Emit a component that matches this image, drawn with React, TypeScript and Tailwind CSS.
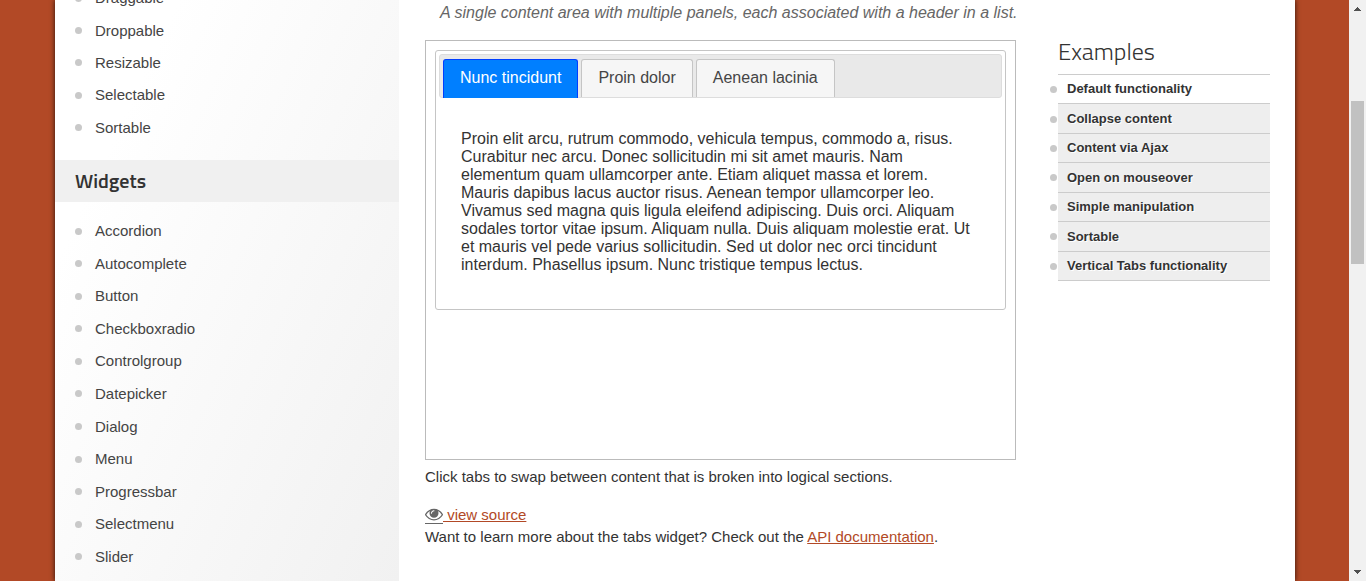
const interactions = ["Draggable", "Droppable", "Resizable", "Selectable", "Sortable"];

const widgets = [
  "Accordion",
  "Autocomplete",
  "Button",
  "Checkboxradio",
  "Controlgroup",
  "Datepicker",
  "Dialog",
  "Menu",
  "Progressbar",
  "Selectmenu",
  "Slider",
];

const tabs = ["Nunc tincidunt", "Proin dolor", "Aenean lacinia"];

const examples = [
  "Default functionality",
  "Collapse content",
  "Content via Ajax",
  "Open on mouseover",
  "Simple manipulation",
  "Sortable",
  "Vertical Tabs functionality",
];

function Bullet() {
  return <span className="size-[7px] shrink-0 rounded-full bg-[#c9c9c9]" />;
}

function EyeIcon() {
  return (
    <svg className="block size-[18px]" viewBox="0 0 1792 1792" fill="currentColor" aria-hidden="true">
      <path d="M1664 960q-152-236-381-353 61 104 61 225 0 185-131.500 316.500t-316.500 131.500-316.500-131.500-131.500-316.500q0-121 61-225-229 117-381 353 133 205 333.500 326.500t434.500 121.500 434.500-121.500 333.500-326.500zm-720-384q0-20-14-34t-34-14q-125 0-214.500 89.500t-89.500 214.500q0 20 14 34t34 14 34-14 14-34q0-86 61-147t147-61q20 0 34-14t14-34zm848 384q0 34-20 69-140 230-376.500 368.500t-499.500 138.500-499.500-139-376.500-368q-20-35-20-69t20-69q140-229 376.500-368t499.500-139 499.500 139 376.500 368q20 35 20 69z" />
    </svg>
  );
}

function SideItem({ label }: { label: string }) {
  return (
    <li className="flex items-center gap-[13px] pl-5">
      <Bullet />
      <a href="#" className="text-[15px] leading-5 text-[#444]">
        {label}
      </a>
    </li>
  );
}

function Sidebar() {
  return (
    <aside className="w-[344px] shrink-0 overflow-hidden bg-[linear-gradient(115deg,#fff_20%,#f1f1f1)]">
      <ul className="-mt-[18px] grid h-[162px] auto-rows-fr">
        {interactions.map((label) => (
          <SideItem key={label} label={label} />
        ))}
      </ul>
      <h3 className="mt-4 bg-[#f0f0f0] pl-5 font-['Titillium_Web','Open_Sans',sans-serif] text-[20px] leading-[42px] font-semibold text-[#333]">
        Widgets
      </h3>
      <ul className="mt-[13px] grid h-[358px] auto-rows-fr">
        {widgets.map((label) => (
          <SideItem key={label} label={label} />
        ))}
      </ul>
    </aside>
  );
}

function TabsDemo() {
  return (
    <div className="min-h-[420px] border border-[#bbb] p-[9px]">
      <div className="rounded-[3px] border border-[#c5c5c5] p-[3px]">
        <div
          role="tablist"
          className="flex h-11 items-end gap-[3px] rounded-[3px] border border-[#ddd] bg-[#e9e9e9] px-[3px]"
        >
          {tabs.map((label, index) => (
            <button
              key={label}
              type="button"
              role="tab"
              aria-selected={index === 0}
              className={
                index === 0
                  ? "-mb-px h-[39px] rounded-t-[3px] border border-b-0 border-[#003eff] bg-[#007fff] px-4 pb-[3px] text-[16px] leading-5 text-white"
                  : "h-[38px] rounded-t-[3px] border border-b-0 border-[#c5c5c5] bg-[#f6f6f6] px-4 pb-[2px] text-[16px] leading-5 text-[#454545]"
              }
            >
              {label}
            </button>
          ))}
        </div>
        <div role="tabpanel" className="px-[22px] pt-8 pb-8">
          <p className="text-[16px] leading-[18px] text-[#333]">
            Proin elit arcu, rutrum commodo, vehicula tempus, commodo a, risus. Curabitur nec arcu.
            Donec sollicitudin mi sit amet mauris. Nam elementum quam ullamcorper ante. Etiam
            aliquet massa et lorem. Mauris dapibus lacus auctor risus. Aenean tempor ullamcorper
            leo. Vivamus sed magna quis ligula eleifend adipiscing. Duis orci. Aliquam sodales
            tortor vitae ipsum. Aliquam nulla. Duis aliquam molestie erat. Ut et mauris vel pede
            varius sollicitudin. Sed ut dolor nec orci tincidunt interdum. Phasellus ipsum. Nunc
            tristique tempus lectus.
          </p>
        </div>
      </div>
    </div>
  );
}

function Examples() {
  return (
    <nav className="ml-[42px] w-[212px] shrink-0 pt-9">
      <h2 className="h-[38px] font-['Titillium_Web','Open_Sans',sans-serif] text-[24px] leading-[30px] font-light text-[#333]">
        Examples
      </h2>
      <ul className="grid h-[207px] auto-rows-fr border-t border-[#ccc]">
        {examples.map((label, index) => (
          <li key={label} className="-ml-2 flex items-center gap-px">
            <Bullet />
            <a
              href="#"
              className={
                index === 0
                  ? "flex h-full flex-1 items-center border-b border-[#ccc] pl-[9px] text-[13px] font-bold text-[#333]"
                  : "flex h-full flex-1 items-center border-b border-[#ccc] bg-[#eee] pl-[9px] text-[13px] font-bold text-[#333] text-shadow-[1px_1px_0_#fff]"
              }
            >
              {label}
            </a>
          </li>
        ))}
      </ul>
    </nav>
  );
}

function Scrollbar() {
  return (
    <div
      aria-hidden="true"
      className="flex w-[17px] shrink-0 flex-col items-center justify-between bg-[#f1f1f1] py-[7px]"
    >
      <svg width="7" height="4" viewBox="0 0 7 4" fill="#505050">
        <path d="M3 0h1v1h1v1h1v1h1v1H0V3h1V2h1V1h1z" />
      </svg>
      <div className="mt-[90px] mb-auto h-[163px] w-[13px] bg-[#c1c1c1]" />
      <svg width="7" height="4" viewBox="0 0 7 4" fill="#505050">
        <path d="M0 0h7v1H6v1H5v1H4v1H3V3H2V2H1V1H0z" />
      </svg>
    </div>
  );
}

export default function App() {
  return (
    <div className="flex h-screen overflow-hidden bg-[#b24926] font-['Liberation_Sans',Arial,sans-serif] text-[#333]">
      <div className="flex min-w-0 flex-1 pr-[54px] pl-[55px]">
        <div className="flex min-w-0 flex-1 bg-white shadow-[0_0_5px_#000000cc]">
          <Sidebar />
          <main className="flex min-w-0 flex-1 pr-[25px] pl-[26px]">
            <div className="min-w-0 flex-1">
              <p className="mb-[15px] pt-px pl-[15px] text-[16px] leading-6 whitespace-nowrap text-[#666] italic">
                A single content area with multiple panels, each associated with a header in a list.
              </p>
              <TabsDemo />
              <p className="mt-1.5 text-[15px] leading-[22px]">
                Click tabs to swap between content that is broken into logical sections.
              </p>
              <p className="mt-4 text-[15px] leading-[22px]">
                <a href="#" className="flex items-center text-[#b24926]">
                  <span className="flex h-[17px] items-end border-b border-[#666] text-[#666]">
                    <EyeIcon />
                  </span>
                  <span className="whitespace-pre underline"> view source</span>
                </a>
              </p>
              <p className="text-[15px] leading-[22px]">
                Want to learn more about the tabs widget? Check out the{" "}
                <a href="#" className="text-[#b24926] underline">
                  API documentation
                </a>
                .
              </p>
            </div>
            <Examples />
          </main>
        </div>
      </div>
      <Scrollbar />
    </div>
  );
}
